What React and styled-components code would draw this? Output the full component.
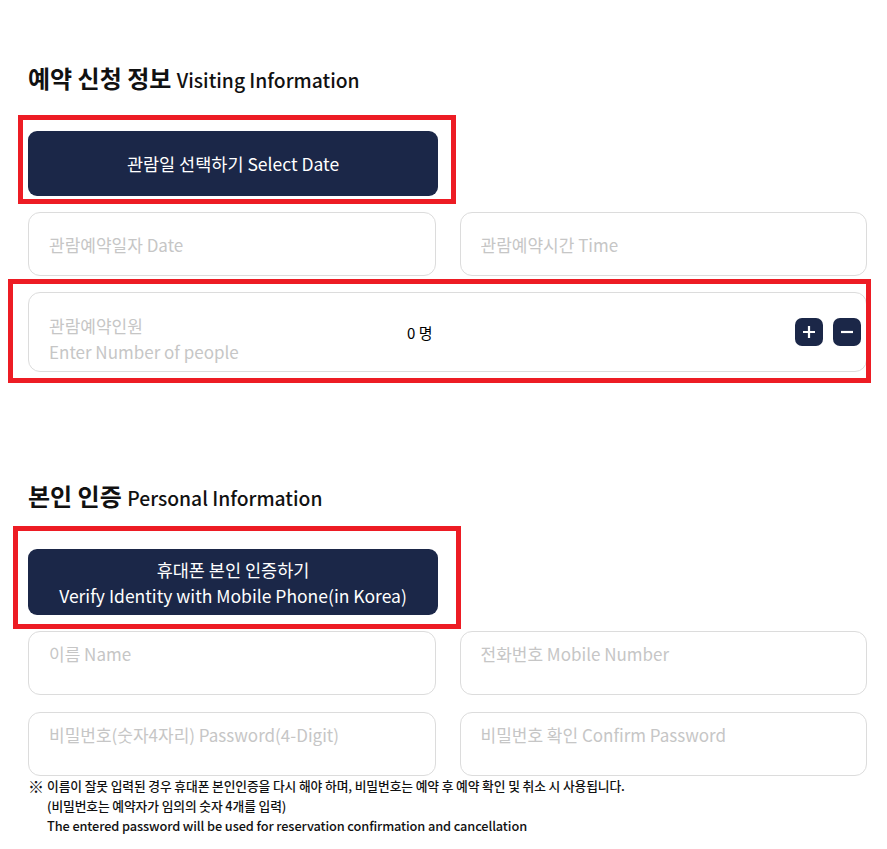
import React, { useState } from "react";
import styled, { createGlobalStyle } from "styled-components";

const GlobalStyle = createGlobalStyle`
  body {
    margin: 0;
    background: #fff;
    font-family: "Noto Sans CJK KR", "Noto Sans", sans-serif;
    color: #111;
  }
`;

const App = () => {
  const [people, setPeople] = useState(0);

  return (
    <Page>
      <GlobalStyle />
      <Section>
        <Title>
          <TitleKo>예약 신청 정보</TitleKo> <TitleEn>Visiting Information</TitleEn>
        </Title>
        <Highlight $fit $top={-16} $left={-10} $right={-18} $bottom={-8}>
          <DarkButton type="button">관람일 선택하기 Select Date</DarkButton>
        </Highlight>
        <Grid>
          <Field placeholder="관람예약일자 Date" readOnly />
          <Field placeholder="관람예약시간 Time" readOnly />
        </Grid>
        <Highlight $top={-13} $left={-20} $right={-4} $bottom={-11}>
          <PeopleBox>
            <PeopleLabel>
              <span>관람예약인원</span>
              <span>Enter Number of people</span>
            </PeopleLabel>
            <Count>{people} 명</Count>
            <Steppers>
              <StepButton type="button" onClick={() => setPeople(people + 1)}>
                <svg width="14" height="14" viewBox="0 0 14 14">
                  <path d="M7 1v12M1 7h12" stroke="#fff" strokeWidth="2.2" />
                </svg>
              </StepButton>
              <StepButton
                type="button"
                onClick={() => setPeople(Math.max(0, people - 1))}
              >
                <svg width="14" height="14" viewBox="0 0 14 14">
                  <path d="M1 7h12" stroke="#fff" strokeWidth="2.2" />
                </svg>
              </StepButton>
            </Steppers>
          </PeopleBox>
        </Highlight>
      </Section>

      <Section $gap={108}>
        <Title>
          <TitleKo>본인 인증</TitleKo> <TitleEn>Personal Information</TitleEn>
        </Title>
        <Highlight $fit $top={-23} $left={-15} $right={-23} $bottom={-14}>
          <DarkButton type="button" $tall>
            휴대폰 본인 인증하기
            <br />
            Verify Identity with Mobile Phone(in Korea)
          </DarkButton>
        </Highlight>
        <Grid>
          <Field $top placeholder="이름 Name" />
          <Field $top placeholder="전화번호 Mobile Number" />
        </Grid>
        <Grid $gap={17}>
          <Field $top type="password" placeholder="비밀번호(숫자4자리) Password(4-Digit)" />
          <Field $top type="password" placeholder="비밀번호 확인 Confirm Password" />
        </Grid>
        <Note>
          <Mark>※</Mark>
          <div>
            이름이 잘못 입력된 경우 휴대폰 본인인증을 다시 해야 하며, 비밀번호는 예약 후 예약 확인 및 취소 시 사용됩니다.
            <br />
            (비밀번호는 예약자가 임의의 숫자 4개를 입력)
            <br />
            The entered password will be used for reservation confirmation and cancellation
          </div>
        </Note>
      </Section>
    </Page>
  );
};

export default App;

const Page = styled.div`
  padding: 62px 20px 20px 28px;
  width: 839px;
`;

const Section = styled.section`
  display: flex;
  flex-direction: column;
  gap: 16px;
  margin-top: ${(p) => p.$gap || 0}px;
`;

const Title = styled.h2`
  margin: 0 0 21px;
  height: 32px;
  line-height: 32px;
  color: #111;
  white-space: nowrap;
`;

const TitleKo = styled.span`
  font-size: 24px;
  font-weight: 700;
`;

const TitleEn = styled.span`
  font-size: 19.3px;
  font-weight: 500;
`;

const Highlight = styled.div`
  position: relative;
  align-self: ${(p) => (p.$fit ? "flex-start" : "stretch")};

  &::after {
    content: "";
    position: absolute;
    top: ${(p) => p.$top}px;
    left: ${(p) => p.$left}px;
    right: ${(p) => p.$right}px;
    bottom: ${(p) => p.$bottom}px;
    border: 5px solid #ed1c24;
    pointer-events: none;
  }
`;

const DarkButton = styled.button`
  display: block;
  width: 410px;
  height: ${(p) => (p.$tall ? 66 : 65)}px;
  padding: ${(p) => (p.$tall ? "2px 0 0" : "0")};
  border: none;
  border-radius: 9px;
  background-color: #1b2748;
  color: #fff;
  font-family: inherit;
  font-size: 17.5px;
  font-weight: 400;
  line-height: 26px;
  cursor: pointer;
`;

const Grid = styled.div`
  display: grid;
  grid-template-columns: 1fr 1fr;
  gap: 24px;
  margin-top: ${(p) => (p.$gap ? p.$gap - 16 : 0)}px;
`;

const Field = styled.input`
  box-sizing: border-box;
  width: 100%;
  height: 64px;
  padding: ${(p) => (p.$top ? "5px 20px 24px" : "0 20px")};
  border: 1px solid #dcdcdc;
  border-radius: 12px;
  outline: none;
  font-family: inherit;
  font-size: 17px;
  color: #333;
  background: #fff;

  &::placeholder {
    color: #c6c6c6;
  }
`;

const PeopleBox = styled.div`
  box-sizing: border-box;
  height: 80px;
  display: flex;
  align-items: center;
  padding: 0 5px 0 20px;
  border: 1px solid #dcdcdc;
  border-radius: 12px;
`;

const PeopleLabel = styled.div`
  width: 358px;
  display: flex;
  flex-direction: column;
  font-size: 17px;
  line-height: 26px;
  color: #c6c6c6;
  margin-top: 14px;
`;

const Count = styled.div`
  font-size: 15px;
  color: #000;
`;

const Steppers = styled.div`
  margin-left: auto;
  display: flex;
  gap: 10px;
`;

const StepButton = styled.button`
  width: 28px;
  height: 28px;
  padding: 0;
  display: flex;
  align-items: center;
  justify-content: center;
  border: none;
  border-radius: 7px;
  background-color: #1b2748;
  cursor: pointer;
`;

const Note = styled.div`
  display: flex;
  margin-top: -16px;
  font-size: 12.75px;
  font-weight: 500;
  letter-spacing: -0.1px;
  line-height: 20px;
  color: #111;
`;

const Mark = styled.span`
  width: 19px;
  flex-shrink: 0;
  font-size: 16px;
`;
